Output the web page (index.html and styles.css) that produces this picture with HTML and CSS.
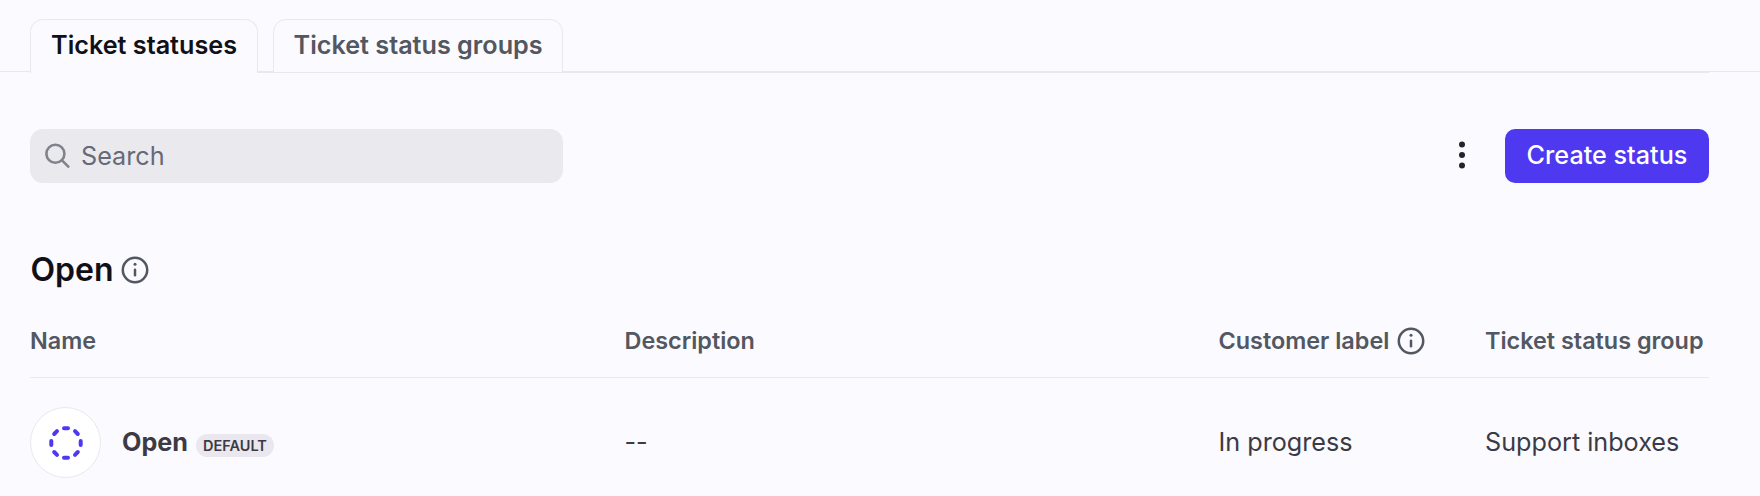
FILE: index.html
```html
<!DOCTYPE html>
<html lang="en">
<head>
	<meta charset="utf-8">
	<meta name="viewport" content="width=device-width">
	<title>Ticket statuses</title>
	<link rel="stylesheet" href="styles.css">
</head>
<body>
	<nav class="tabs">
		<a class="tab active"><span>Ticket statuses</span></a>
		<a class="tab"><span>Ticket status groups</span></a>
	</nav>
	<main class="container">
		<div class="toolbar">
			<label class="search">
				<svg width="26" height="26" viewBox="0 0 26 26"><circle cx="10.4" cy="10.8" r="9"/><path d="M17 17.4L23.3 23.7"/></svg>
				<input type="text" placeholder="Search">
			</label>
			<div class="actions">
				<button class="more" aria-label="More">
					<svg width="6" height="28" viewBox="0 0 6 28"><circle cx="3" cy="3.5" r="3"/><circle cx="3" cy="14" r="3"/><circle cx="3" cy="24.5" r="3"/></svg>
				</button>
				<button class="create">Create status</button>
			</div>
		</div>
		<h2>
			<span>Open</span>
			<svg class="info" width="28" height="28" viewBox="0 0 28 28"><circle cx="14" cy="14" r="12.2"/><path d="M14 13.7v5.6"/><circle class="dot" cx="14" cy="8.2" r="1.5"/></svg>
		</h2>
		<div class="row head">
			<div>Name</div>
			<div>Description</div>
			<div class="cell">
				<span>Customer label</span>
				<svg class="info" width="28" height="28" viewBox="0 0 28 28"><circle cx="14" cy="14" r="12.2"/><path d="M14 13.7v5.6"/><circle class="dot" cx="14" cy="8.2" r="1.5"/></svg>
			</div>
			<div>Ticket status group</div>
		</div>
		<div class="row item">
			<div class="cell">
				<div class="avatar">
					<svg width="36" height="36" viewBox="-18 -18 36 36">
						<path d="M-2 -14.7h4M-2 14.7h4M-14.7 -2v4M14.7 -2v4M9 -11.8L11.8 -9M9 11.8L11.8 9M-9 -11.8L-11.8 -9M-9 11.8L-11.8 9"/>
					</svg>
				</div>
				<b>Open</b>
				<span class="badge">DEFAULT</span>
			</div>
			<div class="text">--</div>
			<div class="text">In progress</div>
			<div class="text">Support inboxes</div>
		</div>
	</main>
</body>
</html>
```
FILE: styles.css
```css
*{
	box-sizing:border-box;
}
body{
	margin:0;
	height:496px;
	overflow:hidden;
	color:#3c3a44;
	background:#fbfaff;
	font-family:Inter,sans-serif;
	font-size:25.2px;
	line-height:30px;
}
svg{
	display:block;
	flex:none;
	fill:none;
	stroke-linecap:round;
}
.tabs{
	display:flex;
	gap:15px;
	height:73px;
	padding:19px 51px 0 30px;
	background:linear-gradient(#e9e8ed,#e9e8ed) 0 71px/100% 1px no-repeat,linear-gradient(#e9e8ed,#e9e8ed) 258px 72px/1451px 1px no-repeat;
}
.tab{
	height:54px;
	padding:10px 19px 0 20px;
	border:1px solid #e9e8ed;
	border-radius:13px 13px 0 0;
	color:#525761;
	background:#fbfaff;
	font-weight:600;
	white-space:nowrap;
}
.tab.active{
	width:228px;
	color:#111016;
	border-bottom:none;
}
.tab:last-child{
	width:290px;
	padding-left:19.5px;
}
.container{
	padding:56px 51px 0 30px;
}
.toolbar{
	display:flex;
	justify-content:space-between;
}
.search{
	display:flex;
	align-items:center;
	gap:10px;
	width:533px;
	height:54px;
	padding:0 15px;
	border-radius:13px;
	background:#eae9ee;
}
.search svg{
	stroke:#80828c;
	stroke-width:2.6;
}
.search input{
	flex:1;
	min-width:0;
	padding:0;
	border:none;
	outline:none;
	background:none;
	font:inherit;
}
.search input::placeholder{
	color:#676976;
	opacity:1;
}
.actions{
	display:flex;
	gap:20px;
}
button{
	padding:0;
	border:none;
	background:none;
	font:inherit;
	cursor:pointer;
}
.more{
	display:flex;
	align-items:center;
	justify-content:center;
	width:46px;
	height:52px;
}
.more svg{
	fill:#26232e;
}
.create{
	width:204px;
	height:54px;
	padding-bottom:2px;
	border-radius:10px;
	color:#fff;
	background:#4f39f0;
	font-weight:500;
}
h2{
	display:flex;
	align-items:center;
	gap:7px;
	height:40px;
	margin:67px 0 0;
	padding-left:.5px;
	color:#111016;
	font-size:32px;
	font-weight:600;
}
.info{
	stroke:#525761;
	stroke-width:2.5;
}
.info .dot{
	fill:#525761;
	stroke:none;
}
.row{
	display:grid;
	grid-template-columns:594.5px 594px 266.5px 1fr;
	align-items:center;
	white-space:nowrap;
}
.cell{
	display:flex;
	align-items:center;
}
.head{
	height:73px;
	margin-top:15px;
	border-bottom:1px solid #e9e8ed;
	color:#525761;
	font-size:23.4px;
	font-weight:600;
}
.head .info{
	margin-left:8px;
}
.item{
	height:129px;
}
.item .text{
	padding-bottom:2px;
}
.avatar{
	display:flex;
	align-items:center;
	justify-content:center;
	width:71px;
	height:71px;
	margin-right:21px;
	border:1px solid #e9e8ed;
	border-radius:50%;
	background:#fff;
}
.avatar svg{
	stroke:#4f39f0;
	stroke-width:4;
}
.item b{
	padding-bottom:2px;
	font-weight:700;
}
.badge{
	height:23px;
	margin:6px 0 0 8px;
	padding:0 7px;
	border-radius:12px;
	background:#eae7ee;
	font-size:14.5px;
	font-weight:600;
	line-height:23px;
}
```
